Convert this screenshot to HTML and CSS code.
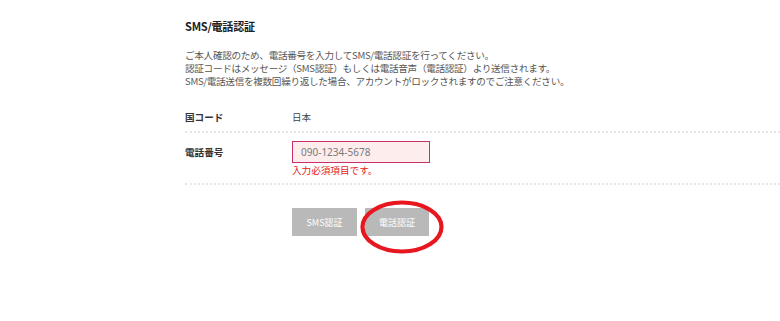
FILE: index.html
```html
<!DOCTYPE html>
<html lang="ja">
<head>
    <meta charset="UTF-8">
    <title>SMS/電話認証</title>
    <link rel="stylesheet" href="styles.css">
</head>
<body>
<div class="auth">
    <h2 class="auth-title">SMS/電話認証</h2>
    <p class="auth-desc">
        ご本人確認のため、電話番号を入力してSMS/電話認証を行ってください。<br>
        認証コードはメッセージ（SMS認証）もしくは電話音声（電話認証）より送信されます。<br>
        SMS/電話送信を複数回繰り返した場合、アカウントがロックされますのでご注意ください。
    </p>
    <div class="form-row">
        <div class="form-label">国コード</div>
        <div class="form-value">日本</div>
    </div>
    <div class="form-row form-row-tel">
        <div class="form-label">電話番号</div>
        <div class="form-value">
            <input type="text" class="tel-input" placeholder="090-1234-5678">
            <div class="form-error">入力必須項目です。</div>
        </div>
    </div>
    <div class="buttons">
        <button class="btn">SMS認証</button>
        <button class="btn btn-tel">電話認証
            <svg class="mark" width="88" height="58" viewBox="0 0 88 58">
                <ellipse cx="44" cy="29" rx="39.5" ry="24.5" fill="none" stroke="#e8161f" stroke-width="4.2"/>
            </svg>
        </button>
    </div>
</div>
</body>
</html>
```

FILE: styles.css
```css
*{
    margin: 0;
    padding: 0;
    box-sizing: border-box;
}
html,body{
    width: 100%;
    height: 100%;
    overflow: hidden;
}
body{
    background: #fff;
    font-family: "Noto Sans CJK JP", "Noto Sans", sans-serif;
    color: #444;
}
.auth{
    margin-left: 185px;
    width: 595px;
    padding-top: 18px;
}
.auth-title{
    font-size: 11px;
    font-weight: bold;
    color: #222;
    line-height: 16px;
    letter-spacing: -0.2px;
}
.auth-desc{
    margin-top: 15px;
    font-size: 9.6px;
    line-height: 13px;
    color: #555;
    letter-spacing: -0.3px;
}
.form-row{
    display: flex;
    border-bottom: 2px dotted #e6e6e6;
    font-size: 9.6px;
    line-height: 14px;
    padding: 22px 0 7px;
}
.form-row-tel{
    padding: 8px 0 7px;
}
.form-label{
    width: 107px;
    font-weight: bold;
    color: #333;
}
.form-row-tel .form-label{
    padding-top: 4px;
}
.form-value{
    color: #444;
}
.tel-input{
    display: block;
    width: 138px;
    height: 22px;
    border: 1px solid #c8306a;
    background: #fdeded;
    padding: 0 8px;
    font-family: "Noto Sans", sans-serif;
    font-size: 10px;
    color: #7a7a7a;
    outline: none;
}
.tel-input::placeholder{
    color: #7a7a7a;
}
.form-error{
    margin-top: 1px;
    color: #e42020;
    font-size: 9.6px;
    line-height: 12px;
}
.buttons{
    display: flex;
    gap: 8px;
    margin-left: 107px;
    margin-top: 23px;
}
.btn{
    position: relative;
    width: 65px;
    height: 28px;
    border: none;
    background: #b9b9b9;
    color: #fff;
    font-family: "Noto Sans CJK JP", sans-serif;
    font-size: 9px;
}
.btn-tel{
    width: 64px;
}
.mark{
    position: absolute;
    left: -7px;
    top: -10px;
}
```
